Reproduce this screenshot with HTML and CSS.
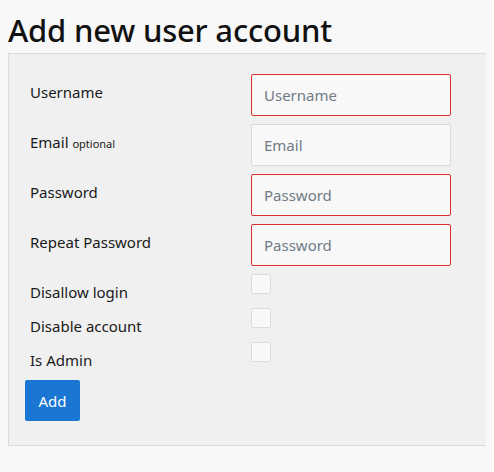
FILE: index.html
```html
<!DOCTYPE html>
<html lang="en">
<head>
<meta charset="utf-8">
<title>Add new user account</title>
<link rel="stylesheet" href="styles.css">
</head>
<body>
<h1 class="title">Add new user account</h1>
<form class="panel">
  <div class="row">
    <label class="label" for="u">Username</label>
    <input class="field invalid" id="u" type="text" placeholder="Username">
  </div>
  <div class="row">
    <label class="label" for="e">Email <small class="hint">optional</small></label>
    <input class="field" id="e" type="email" placeholder="Email">
  </div>
  <div class="row">
    <label class="label" for="p">Password</label>
    <input class="field invalid" id="p" type="password" placeholder="Password">
  </div>
  <div class="row">
    <label class="label" for="p2">Repeat Password</label>
    <input class="field invalid" id="p2" type="password" placeholder="Password">
  </div>
  <div class="row check-row">
    <label class="label" for="c1">Disallow login</label>
    <input class="check" id="c1" type="checkbox">
  </div>
  <div class="row check-row">
    <label class="label" for="c2">Disable account</label>
    <input class="check" id="c2" type="checkbox">
  </div>
  <div class="row check-row">
    <label class="label" for="c3">Is Admin</label>
    <input class="check" id="c3" type="checkbox">
  </div>
  <button class="btn" type="button">Add</button>
</form>
</body>
</html>
```
FILE: styles.css
```css
body {
  margin: 8px;
  background: #f8f8f8;
  font-family: "Noto Sans", "Open Sans", sans-serif;
  color: #1a1a1a;
}
.title {
  margin: 0;
  font-size: 31px;
  font-weight: 500;
  line-height: 45px;
  letter-spacing: -0.2px;
  color: #111;
}
.panel {
  box-sizing: border-box;
  margin: 0 -8px 0 0;
  padding: 20px 16px 24px;
  background: #f0f0f0;
  border: 1px solid #dcdcdc;
  border-right: none;
  display: flex;
  flex-direction: column;
}
.row {
  display: flex;
  align-items: flex-start;
  height: 50px;
}
.check-row {
  height: 34px;
}
.label {
  width: 226px;
  box-sizing: border-box;
  padding: 6px 0 0 5px;
  font-size: 15px;
  line-height: 24px;
  color: #1a1a1a;
}
.hint {
  font-size: 11px;
}
.field {
  width: 200px;
  height: 42px;
  box-sizing: border-box;
  margin: 0;
  padding: 0 12px;
  background: #f8f8f8;
  border: 1px solid #dadada;
  border-radius: 2px;
  font-family: inherit;
  font-size: 15px;
  color: #333;
  outline: none;
}
.field::placeholder {
  color: #707a86;
}
.field.invalid {
  border-color: #d9302f;
}
.check {
  appearance: none;
  -webkit-appearance: none;
  width: 20px;
  height: 20px;
  margin: 0;
  background: #f8f8f8;
  border: 1px solid #dcdcdc;
  border-radius: 2px;
}
.btn {
  align-self: flex-start;
  margin-top: 4px;
  width: 55px;
  height: 41px;
  padding: 0;
  background: #1976d2;
  border: none;
  border-radius: 2px;
  color: #fff;
  font-family: inherit;
  font-size: 15px;
}
```
